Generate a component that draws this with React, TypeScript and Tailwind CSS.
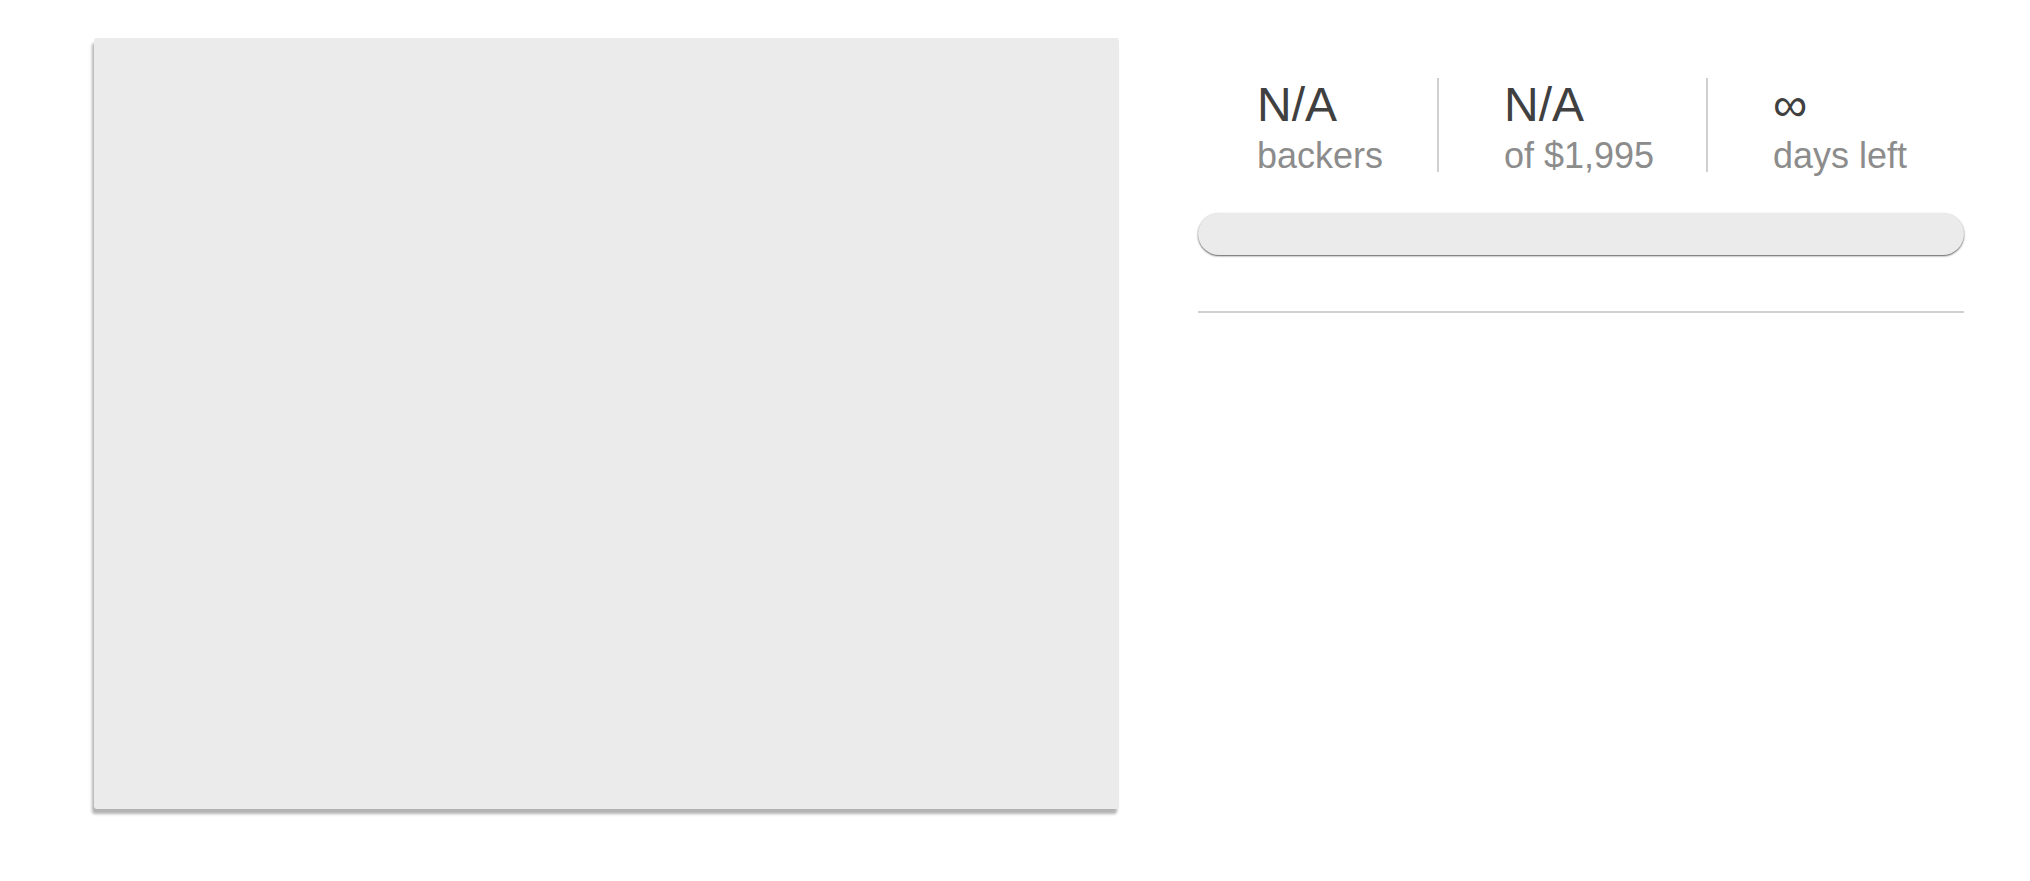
export default function App() {
  const stats = [
    { value: "N/A", label: "backers", pad: "pl-[59px]", w: "w-[240px]" },
    { value: "N/A", label: "of $1,995", pad: "pl-[65px]", w: "w-[269px]" },
    { value: "∞", label: "days left", pad: "pl-[65px]", w: "flex-1" },
  ];

  return (
    <div className="min-h-screen bg-white font-['Liberation_Sans',Arial,sans-serif]">
      <div className="flex pl-[94px] pt-[38px] pr-[66px] gap-[79px]">
        <div className="w-[1025px] h-[771px] bg-[#ebebeb] rounded-[3px] shadow-[-2px_5px_3px_rgba(0,0,0,0.3)]" />

        <div className="flex-1 flex flex-col pt-[40px]">
          <div className="flex items-start">
            {stats.map((s, i) => (
              <div key={i} className={`flex items-start ${s.w}`}>
                {i > 0 && <div className="w-[2px] h-[94px] bg-[#d0d0d0] -ml-[1px]" />}
                <div className={`${s.pad} pt-[3px]`}>
                  <div className="text-[48px] leading-[48px] text-[#404040]">{s.value}</div>
                  <div className="mt-[2px] text-[36px] leading-[50px] text-[#8c8c8c]">{s.label}</div>
                </div>
              </div>
            ))}
          </div>

          <div className="mt-[32px] h-[42px] rounded-full bg-[#ebebeb] shadow-[0_1px_2px_rgba(0,0,0,0.65)]" />

          <div className="mt-[56px] h-[2px] bg-[#d0d0d0]" />
        </div>
      </div>
    </div>
  );
}
